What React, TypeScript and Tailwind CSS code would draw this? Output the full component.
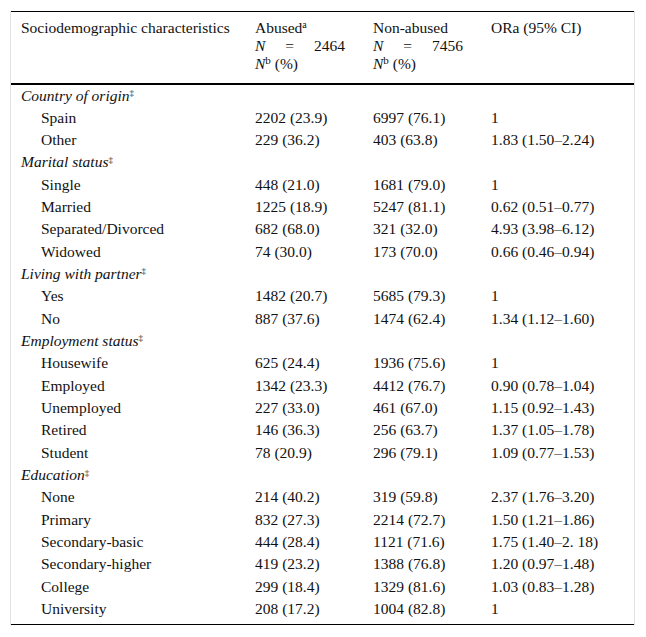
type Row = { label: string; group?: boolean; a?: string; b?: string; or?: string };

const rows: Row[] = [
  { label: "Country of origin", group: true },
  { label: "Spain", a: "2202 (23.9)", b: "6997 (76.1)", or: "1" },
  { label: "Other", a: "229 (36.2)", b: "403 (63.8)", or: "1.83 (1.50–2.24)" },
  { label: "Marital status", group: true },
  { label: "Single", a: "448 (21.0)", b: "1681 (79.0)", or: "1" },
  { label: "Married", a: "1225 (18.9)", b: "5247 (81.1)", or: "0.62 (0.51–0.77)" },
  { label: "Separated/Divorced", a: "682 (68.0)", b: "321 (32.0)", or: "4.93 (3.98–6.12)" },
  { label: "Widowed", a: "74 (30.0)", b: "173 (70.0)", or: "0.66 (0.46–0.94)" },
  { label: "Living with partner", group: true },
  { label: "Yes", a: "1482 (20.7)", b: "5685 (79.3)", or: "1" },
  { label: "No", a: "887 (37.6)", b: "1474 (62.4)", or: "1.34 (1.12–1.60)" },
  { label: "Employment status", group: true },
  { label: "Housewife", a: "625 (24.4)", b: "1936 (75.6)", or: "1" },
  { label: "Employed", a: "1342 (23.3)", b: "4412 (76.7)", or: "0.90 (0.78–1.04)" },
  { label: "Unemployed", a: "227 (33.0)", b: "461 (67.0)", or: "1.15 (0.92–1.43)" },
  { label: "Retired", a: "146 (36.3)", b: "256 (63.7)", or: "1.37 (1.05–1.78)" },
  { label: "Student", a: "78 (20.9)", b: "296 (79.1)", or: "1.09 (0.77–1.53)" },
  { label: "Education", group: true },
  { label: "None", a: "214 (40.2)", b: "319 (59.8)", or: "2.37 (1.76–3.20)" },
  { label: "Primary", a: "832 (27.3)", b: "2214 (72.7)", or: "1.50 (1.21–1.86)" },
  { label: "Secondary-basic", a: "444 (28.4)", b: "1121 (71.6)", or: "1.75 (1.40–2. 18)" },
  { label: "Secondary-higher", a: "419 (23.2)", b: "1388 (76.8)", or: "1.20 (0.97–1.48)" },
  { label: "College", a: "299 (18.4)", b: "1329 (81.6)", or: "1.03 (0.83–1.28)" },
  { label: "University", a: "208 (17.2)", b: "1004 (82.8)", or: "1" },
];

function HeadCount({ name, sup, n }: { name: string; sup?: string; n: string }) {
  return (
    <div className="flex flex-col leading-[18px]">
      <span>
        {name}
        {sup && <sup className="text-[10px]">{sup}</sup>}
      </span>
      <span className="flex w-[90px] justify-between">
        <i>N</i>
        <span>=</span>
        <span>{n}</span>
      </span>
      <span>
        <i>N</i>
        <sup className="text-[11px]">b</sup> (%)
      </span>
    </div>
  );
}

export default function App() {
  return (
    <div className="bg-white pt-[11px] pb-[11px] font-['Liberation_Serif',serif] text-[15.5px] text-[#111]">
      <div className="ml-[10px] w-[625px] border-x border-[#e2e2e2]">
        <table className="w-full table-fixed border-collapse">
          <colgroup>
            <col className="w-[233px]" />
            <col className="w-[118px]" />
            <col className="w-[118px]" />
            <col />
          </colgroup>
          <thead>
            <tr className="border-t border-b-2 border-black align-top">
              <th className="pl-[10px] pt-[7px] pb-[10px] text-left font-normal leading-[18px]">
                Sociodemographic characteristics
              </th>
              <th className="pl-[11px] pt-[7px] pb-[10px] text-left font-normal">
                <HeadCount name="Abused" sup="a" n="2464" />
              </th>
              <th className="pl-[11px] pt-[7px] pb-[10px] text-left font-normal">
                <HeadCount name="Non-abused" n="7456" />
              </th>
              <th className="pl-[11px] pt-[7px] pb-[10px] text-left font-normal leading-[18px]">
                ORa (95% CI)
              </th>
            </tr>
          </thead>
          <tbody className="border-b border-black">
            {rows.map((r, i) =>
              r.group ? (
                <tr key={i} className="h-[22.35px]">
                  <td colSpan={4} className="pl-[10px] italic leading-[18px]">
                    {r.label}
                    <sup className="text-[9px] not-italic">‡</sup>
                  </td>
                </tr>
              ) : (
                <tr key={i} className="h-[22.35px] leading-[18px]">
                  <td className="pl-[30px]">{r.label}</td>
                  <td className="pl-[11px]">{r.a}</td>
                  <td className="pl-[11px]">{r.b}</td>
                  <td className="pl-[11px]">{r.or}</td>
                </tr>
              )
            )}
            <tr className="h-[4px]">
              <td colSpan={4}></td>
            </tr>
          </tbody>
        </table>
      </div>
    </div>
  );
}
